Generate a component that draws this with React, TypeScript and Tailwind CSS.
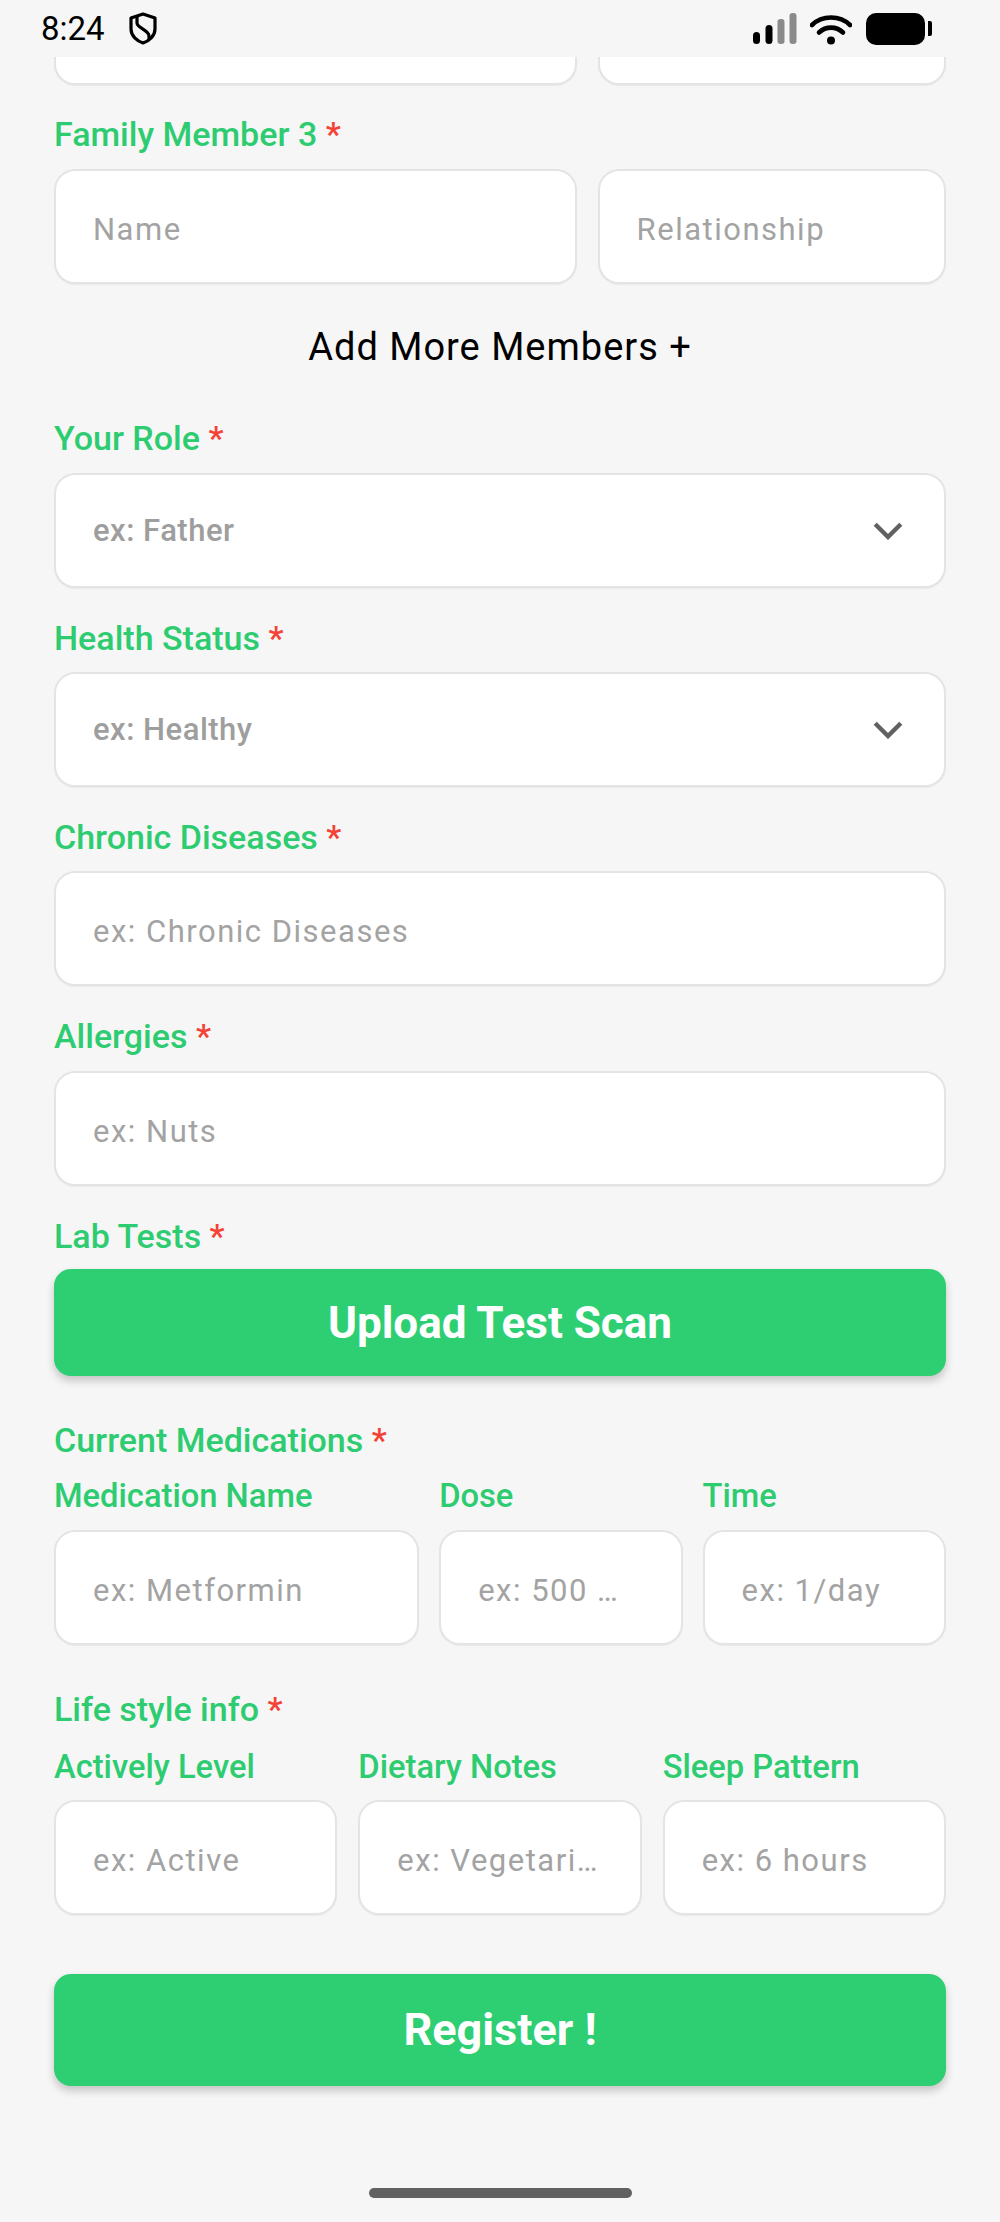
import React from "react";

function Label({ text, star = false, small = false, className = "" }: { text: string; star?: boolean; small?: boolean; className?: string }) {
  return (
    <div className={`h-[46px] leading-[46px] font-medium text-[#2ecc71] whitespace-nowrap ${small ? "text-[32.7px]" : "text-[34px]"} ${className}`}>
      {text}
      {star && <span className="text-[#f44336]"> *</span>}
    </div>
  );
}

function Input({ text, className = "", select = false }: { text: string; className?: string; select?: boolean }) {
  return (
    <div className={`h-[115px] bg-white border-2 border-[#e4e4e4] rounded-[21px] pl-[37px] flex items-center justify-between whitespace-nowrap overflow-hidden shadow-[0_1px_1px_rgba(0,0,0,0.05)] ${select ? "pr-[41px]" : "pr-[30px]"} ${className}`}>
      <span className={select ? "pt-[2px] text-[31px] tracking-[0.5px] font-medium text-[#9e9e9e]" : "pt-[8px] text-[31px] tracking-[1.5px] text-[#a3a3a3]"}>{text}</span>
      {select && (
        <svg width="30" height="18" viewBox="0 0 30 18" fill="none">
          <path d="M2.2 2.2 L15 15 L27.8 2.2" stroke="#616161" strokeWidth="4.4" />
        </svg>
      )}
    </div>
  );
}

function Button({ text, className = "" }: { text: string; className?: string }) {
  return (
    <div className={`bg-[#2ecf73] rounded-[17px] flex items-center justify-center text-white font-bold shadow-[0_5px_9px_rgba(0,0,0,0.2)] ${className}`}>
      {text}
    </div>
  );
}

function StatusBar() {
  return (
    <div className="relative z-10 h-[57px] bg-[#f6f6f6] flex items-center justify-between pl-[41px] pr-[68px]">
      <div className="flex items-center gap-[24px]">
        <span className="text-[33px] text-black leading-none">8:24</span>
        <svg width="28" height="33" viewBox="0 0 28 33" fill="none" stroke="#000" strokeWidth="3.2" strokeLinejoin="round">
          <path d="M14 2 L26 6 V17 C26 24 20 29 14 31 C8 29 2 24 2 17 V6 Z" />
          <path d="M8 5 V11 C8 16 20 18 20 24 V27" />
        </svg>
      </div>
      <div className="flex items-center">
        <svg width="44" height="31" viewBox="0 0 44 31" className="mr-[13px]">
          <rect x="0" y="19" width="7" height="12" rx="3.5" fill="#000" />
          <rect x="12.5" y="12" width="7" height="19" rx="3.5" fill="#000" />
          <rect x="24.5" y="6" width="7" height="25" rx="3" fill="#8a8a8a" />
          <rect x="36.5" y="0" width="7" height="31" rx="3" fill="#8a8a8a" />
        </svg>
        <svg width="42" height="32" viewBox="0 0 42 32" fill="none" stroke="#000" className="mr-[14px]">
          <path d="M2 12 C12 2 30 2 40 12" strokeWidth="4.6" strokeLinecap="round" />
          <path d="M9 19.5 C16 13 26 13 33 19.5" strokeWidth="4.6" strokeLinecap="round" />
          <circle cx="21" cy="27.5" r="4" fill="#000" stroke="none" />
        </svg>
        <div className="w-[59px] h-[32px] bg-black rounded-[10px]" />
        <div className="ml-[3px] w-[4px] h-[15px] bg-black rounded-r-[2px]" />
      </div>
    </div>
  );
}

export default function App() {
  return (
    <div className="relative w-[1000px] h-[2222px] bg-[#f6f6f6] overflow-hidden font-['Roboto',sans-serif]">
      <StatusBar />
      <div className="h-[2165px] overflow-hidden">
        <div className="px-[54px] mt-[-87px]">
          <div className="grid grid-cols-[3fr_2fr] gap-[21px]">
            <Input text="" />
            <Input text="" />
          </div>
          <Label text="Family Member 3" star className="mt-[26px] mb-[12px]" />
          <div className="grid grid-cols-[3fr_2fr] gap-[21px]">
            <Input text="Name" />
            <Input text="Relationship" />
          </div>
          <div className="mt-[36px] h-[54px] leading-[54px] text-center text-[38px] tracking-[1px] text-black">Add More Members +</div>
          <Label text="Your Role" star className="mt-[41px] mb-[12px]" />
          <Input text="ex: Father" select />
          <Label text="Health Status" star className="mt-[27px] mb-[11px]" />
          <Input text="ex: Healthy" select />
          <Label text="Chronic Diseases" star className="mt-[27px] mb-[11px]" />
          <Input text="ex: Chronic Diseases" />
          <Label text="Allergies" star className="mt-[27px] mb-[12px]" />
          <Input text="ex: Nuts" />
          <Label text="Lab Tests" star className="mt-[27px] mb-[10px]" />
          <Button text="Upload Test Scan" className="h-[107px] text-[44px]" />
          <Label text="Current Medications" star className="mt-[41px] mb-[10px]" />
          <div className="grid grid-cols-[3fr_2fr_2fr] gap-[20px]">
            <div className="min-w-0">
              <Label small text="Medication Name" className="mb-[11px]" />
              <Input text="ex: Metformin" />
            </div>
            <div className="min-w-0">
              <Label small text="Dose" className="mb-[11px]" />
              <Input text="ex: 500 …" />
            </div>
            <div className="min-w-0">
              <Label small text="Time" className="mb-[11px]" />
              <Input text="ex: 1/day" />
            </div>
          </div>
          <Label text="Life style info" star className="mt-[41px] mb-[12px]" />
          <div className="grid grid-cols-3 gap-[21px]">
            <div className="min-w-0">
              <Label small text="Actively Level" className="mb-[10px]" />
              <Input text="ex: Active" />
            </div>
            <div className="min-w-0">
              <Label small text="Dietary Notes" className="mb-[10px]" />
              <Input text="ex: Vegetari…" />
            </div>
            <div className="min-w-0">
              <Label small text="Sleep Pattern" className="mb-[10px]" />
              <Input text="ex: 6 hours" />
            </div>
          </div>
          <Button text="Register !" className="h-[112px] mt-[59px] text-[45px]" />
        </div>
      </div>
      <div className="absolute left-[369px] top-[2188px] w-[263px] h-[10px] rounded-full bg-[#616161]" />
    </div>
  );
}
